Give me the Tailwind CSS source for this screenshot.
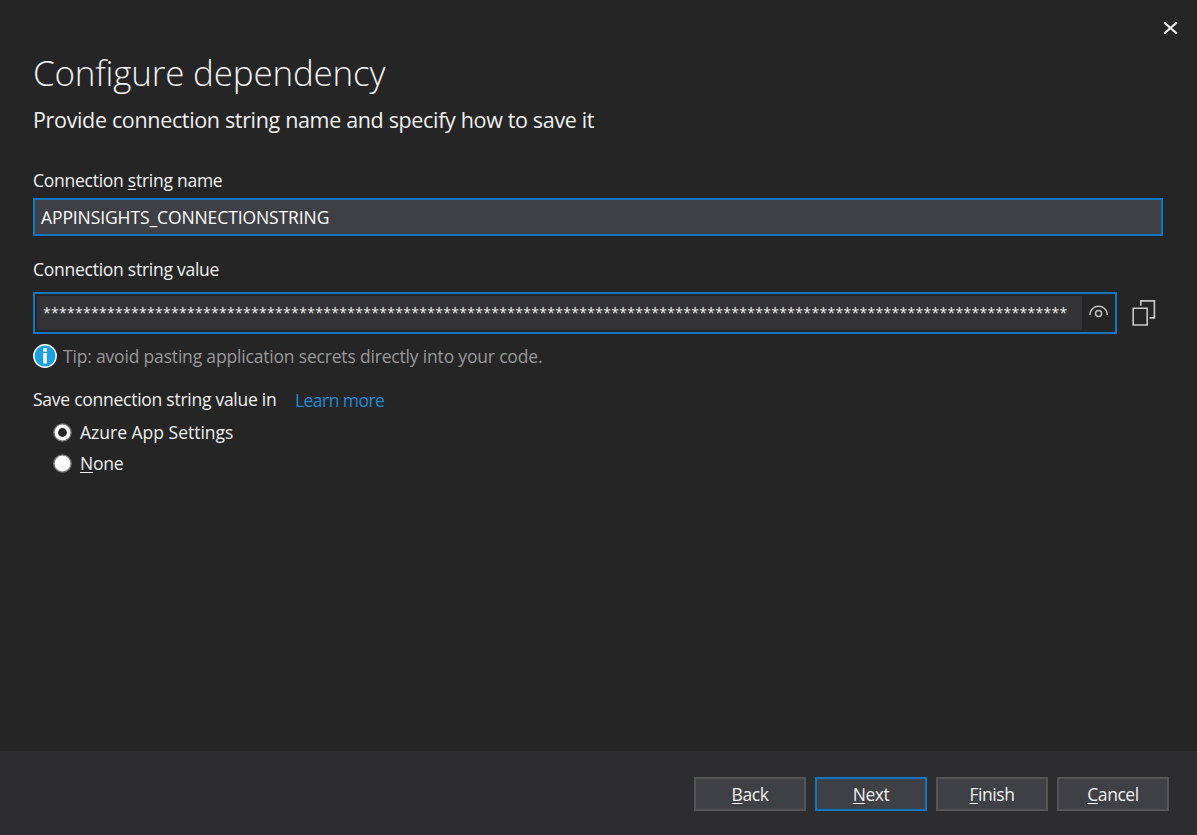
<!DOCTYPE html>
<html lang="en">
<head>
<meta charset="utf-8">
<title>Configure dependency</title>
<script src="https://cdn.jsdelivr.net/npm/@tailwindcss/browser@4"></script>
</head>
<body class="bg-[#252526]">
<main class="flex h-[835px] w-[1197px] flex-col overflow-hidden bg-[#252526] font-['Open_Sans',sans-serif] text-[17.5px] tracking-[-0.26px] text-[#f1f1f1]">
  <section class="flex flex-1 flex-col whitespace-nowrap">
    <div class="flex h-[49px] justify-end pt-[22px] pr-[19px]">
      <svg class="h-[12px] w-[15px]" viewBox="0 0 15 12" fill="none" stroke="#f1f1f1" stroke-width="2"><path d="M1.2 0.4L13.8 11.6M13.8 0.4L1.2 11.6"/></svg>
    </div>
    <div class="flex flex-col pl-[33px]">
      <h1 class="h-[50px] text-[35px] leading-[48px] font-light tracking-[-0.2px]">Configure dependency</h1>
      <p class="h-[66px] text-[21.5px] leading-[42px] tracking-[-0.34px]">Provide connection string name and specify how to save it</p>
      <label class="h-[33px] leading-[31px]">Connection <u class="underline-offset-2">s</u>tring name</label>
      <div class="flex h-[38px] w-[1130px] items-center border-2 border-[#0e78c4] bg-[#3f3f46] pl-[6px] tracking-[-0.1px] text-white">APPINSIGHTS_CONNECTIONSTRING</div>
      <label class="h-[56px] leading-[67px]">Connection string value</label>
      <div class="flex h-[42px] items-center">
        <div class="flex h-[42px] w-[1084px] border-2 border-[#0e78c4] p-[2px]">
          <div class="h-[34px] w-[1045px] bg-[#333337] pl-[6px] text-[14px] leading-[34px] tracking-[0.293px] text-[#e8e8e8]">********************************************************************************************************************************</div>
          <svg class="mt-[7px] ml-[7px] h-[20px] w-[20px]" viewBox="0 0 20 20" fill="none" stroke="#c0c0c0" stroke-width="1.5"><path d="M1 12C1 0.4 18.2 0.4 18.2 12"/><circle cx="9.6" cy="10.4" r="3"/></svg>
        </div>
        <svg class="ml-[15px] h-[27px] w-[24px]" viewBox="0 0 24 27" fill="none" stroke="#c8c8c8" stroke-width="1.6"><path d="M1.2 8.3h14v16.7h-14zM8.8 5.7V0.9h13.6v17H17.5"/></svg>
      </div>
      <div class="flex h-[50px] pt-[10px] text-[#999999]">
        <svg class="h-[24px] w-[24px]" viewBox="0 0 24 24"><circle cx="12" cy="12" r="11.2" fill="#1ba1e2" stroke="#fff" stroke-width="1.4"/><path fill="#fff" d="M10.2 4.3h3.6v3.5h-3.6zM10.2 9h3.6v10.6h-3.6z"/></svg>
        <span class="ml-[6px] leading-[25px] tracking-[-0.18px]">Tip: avoid pasting application secrets directly into your code.</span>
      </div>
      <div class="flex h-[33px] leading-[31px]">
        <span class="w-[262px]">Save connection string value in</span>
        <a class="pt-px tracking-[-0.55px] text-[#1a8ad4]">Learn more</a>
      </div>
      <div class="flex h-[31px] items-center pl-[20px]">
        <svg class="h-[20px] w-[19px]" viewBox="0 0 19 20"><circle cx="9.5" cy="9.5" r="8.6" fill="#fff" stroke="#777" stroke-width="1.4"/><circle cx="9.5" cy="9.5" r="4.4" fill="#252526"/></svg>
        <span class="ml-[8px] tracking-normal">Azure App Settings</span>
      </div>
      <div class="flex h-[31px] items-center pl-[20px]">
        <svg class="h-[20px] w-[19px]" viewBox="0 0 19 20"><circle cx="9.5" cy="9.5" r="8.6" fill="#fff" stroke="#777" stroke-width="1.4"/></svg>
        <span class="ml-[8px]"><u class="underline-offset-2">N</u>one</span>
      </div>
    </div>
  </section>
  <footer class="flex h-[84px] gap-[9px] bg-[#2d2d30] pt-[26px] pl-[694px] text-center leading-[31px] tracking-[-0.45px]">
    <div class="h-[34px] w-[112px] border-2 border-[#555555] bg-[#3f3f46]"><u class="underline-offset-2">B</u>ack</div>
    <div class="h-[34px] w-[112px] border-2 border-[#0e78c4] bg-[#3f3f46]"><u class="underline-offset-2">N</u>ext</div>
    <div class="h-[34px] w-[112px] border-2 border-[#555555] bg-[#3f3f46]"><u class="underline-offset-2">F</u>inish</div>
    <div class="h-[34px] w-[112px] border-2 border-[#555555] bg-[#3f3f46]"><u class="underline-offset-2">C</u>ancel</div>
  </footer>
</main>
</body>
</html>
